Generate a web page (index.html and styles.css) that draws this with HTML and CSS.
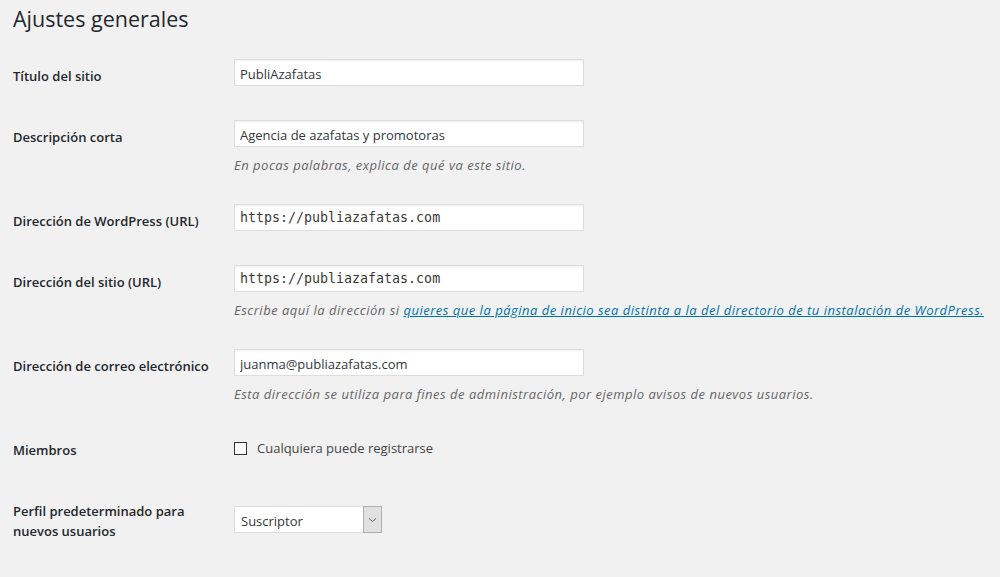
FILE: index.html
```html
<!DOCTYPE html>
<html lang="es">
<head>
<meta charset="utf-8">
<title>Ajustes generales</title>
<link rel="stylesheet" href="styles.css">
</head>
<body>
<div class="wrap">
  <h1 class="page-title">Ajustes generales</h1>
  <form class="form-table">
    <div class="row">
      <label class="label" for="blogname">Título del sitio</label>
      <div class="field"><input id="blogname" class="text" type="text" value="PubliAzafatas"></div>
    </div>
    <div class="row has-desc">
      <label class="label" for="blogdesc">Descripción corta</label>
      <div class="field">
        <input id="blogdesc" class="text" type="text" value="Agencia de azafatas y promotoras">
        <p class="desc">En pocas palabras, explica de qué va este sitio.</p>
      </div>
    </div>
    <div class="row">
      <label class="label" for="siteurl">Dirección de WordPress (URL)</label>
      <div class="field"><input id="siteurl" class="text code" type="text" value="https://publiazafatas.com"></div>
    </div>
    <div class="row has-desc">
      <label class="label" for="home">Dirección del sitio (URL)</label>
      <div class="field">
        <input id="home" class="text code" type="text" value="https://publiazafatas.com">
        <p class="desc">Escribe aquí la dirección si <a href="#">quieres que la página de inicio sea distinta a la del directorio de tu instalación de WordPress.</a></p>
      </div>
    </div>
    <div class="row has-desc">
      <label class="label" for="email">Dirección de correo electrónico</label>
      <div class="field">
        <input id="email" class="text" type="text" value="juanma@publiazafatas.com">
        <p class="desc">Esta dirección se utiliza para fines de administración, por ejemplo avisos de nuevos usuarios.</p>
      </div>
    </div>
    <div class="row">
      <div class="label">Miembros</div>
      <div class="field">
        <label class="check"><span class="box"></span><span>Cualquiera puede registrarse</span></label>
      </div>
    </div>
    <div class="row">
      <label class="label wrapable" for="role">Perfil predeterminado para nuevos usuarios</label>
      <div class="field">
        <div class="select" id="role">
          <span class="select-value">Suscriptor</span>
          <span class="select-arrow"><svg width="9" height="6" viewBox="0 0 9 6"><path d="M1 1.5 L4.5 4.5 L8 1.5" fill="none" stroke="#6b6b6b" stroke-width="1"/></svg></span>
        </div>
      </div>
    </div>
  </form>
</div>
</body>
</html>
```
FILE: styles.css
```css
html, body {
  margin: 0;
  padding: 0;
  background: #f1f1f1;
}
body {
  font-family: "Open Sans", "Noto Sans", sans-serif;
  font-size: 13px;
  color: #444;
}
.wrap {
  padding-left: 13px;
}
.page-title {
  margin: 0 0 10px;
  padding-top: 4px;
  font-size: 21.5px;
  line-height: 29px;
  font-weight: 400;
  color: #23282d;
}
.form-table {
  display: flex;
  flex-direction: column;
}
.row {
  display: grid;
  grid-template-columns: 200px 1fr;
  column-gap: 21px;
  align-items: start;
  padding: 16px 0 18px;
}
.row.has-desc {
  padding-bottom: 15px;
}
.label {
  margin-top: 7px;
  font-weight: 600;
  font-size: 13px;
  line-height: 20px;
  color: #23282d;
  white-space: nowrap;
}
.label.wrapable {
  white-space: normal;
}
.field {
  min-width: 0;
}
.text {
  display: block;
  box-sizing: border-box;
  width: 350px;
  height: 27px;
  margin: 0;
  padding: 2px 5px 0;
  border: 1px solid #ddd;
  background: #fff;
  box-shadow: inset 0 1px 2px rgba(0, 0, 0, 0.07);
  font-family: "Open Sans", "Noto Sans", sans-serif;
  font-size: 13px;
  color: #32373c;
  outline: none;
}
.text.code {
  font-family: "DejaVu Sans Mono", "Liberation Mono", monospace;
  font-size: 13.3px;
  padding-top: 0;
  color: #3a3a3a;
}
.desc {
  margin: 10px 0 0;
  font-size: 13px;
  line-height: 16px;
  letter-spacing: 0.5px;
  font-style: italic;
  color: #666;
  white-space: nowrap;
}
.desc a {
  color: #0073aa;
  text-decoration: underline;
}
.check {
  display: flex;
  align-items: center;
  gap: 10px;
  margin-top: 7px;
  line-height: 16px;
  font-size: 13px;
  color: #444;
}
.box {
  display: block;
  box-sizing: border-box;
  width: 13px;
  height: 13px;
  border: 1px solid #333;
  background: #fff;
}
.select {
  display: flex;
  box-sizing: border-box;
  width: 148px;
  height: 27px;
  margin-top: 12px;
  border: 1px solid #ddd;
  background: #fff;
}
.select-value {
  flex: 1;
  padding: 5px 6px 0;
  font-size: 13px;
  line-height: 18px;
  color: #32373c;
}
.select-arrow {
  display: flex;
  align-items: center;
  justify-content: center;
  width: 17px;
  margin: -1px -1px -1px 0;
  border: 1px solid #adadad;
  background: #e1e1e1;
}
```
